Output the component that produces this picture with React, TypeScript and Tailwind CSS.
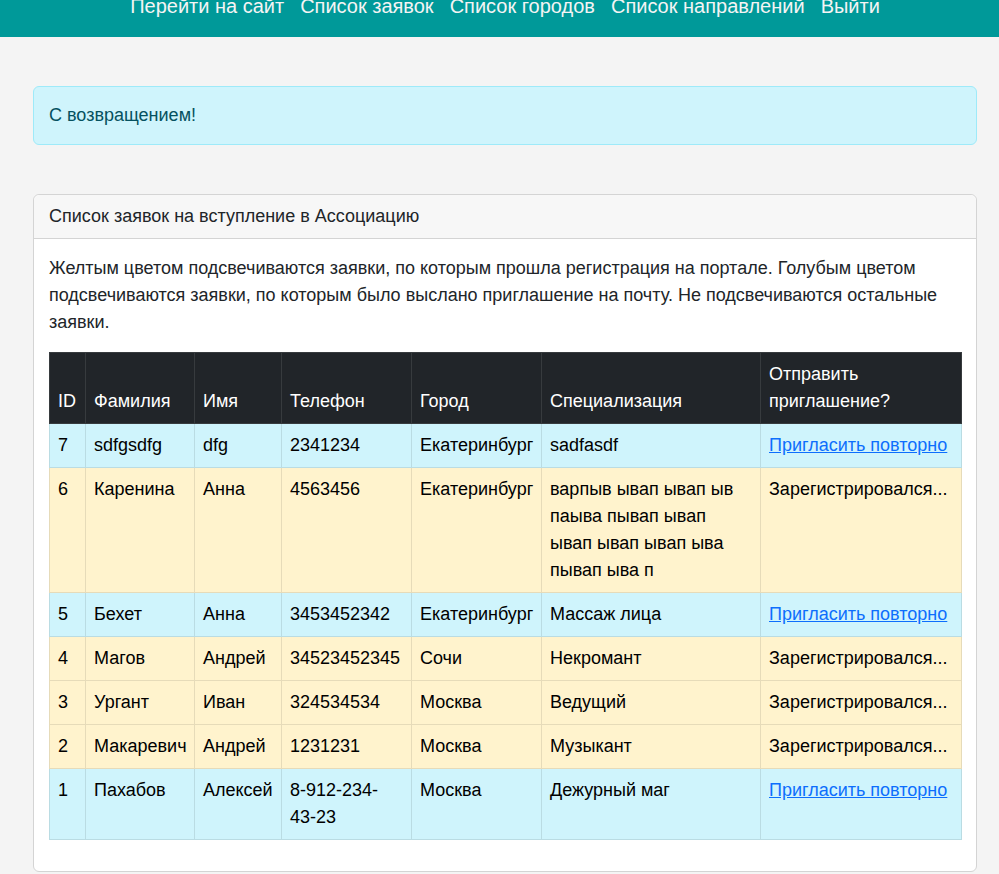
import React from 'react';

type Row = {
  id: number;
  last: string;
  first: string;
  phone: string;
  city: string;
  spec: string;
  kind: 'info' | 'warning';
};

const rows: Row[] = [
  { id: 7, last: 'sdfgsdfg', first: 'dfg', phone: '2341234', city: 'Екатеринбург', spec: 'sadfasdf', kind: 'info' },
  { id: 6, last: 'Каренина', first: 'Анна', phone: '4563456', city: 'Екатеринбург', spec: 'варпыв ывап ывап ыв паыва пывап ывап ывап ывап ывап ыва пывап ыва п', kind: 'warning' },
  { id: 5, last: 'Бехет', first: 'Анна', phone: '3453452342', city: 'Екатеринбург', spec: 'Массаж лица', kind: 'info' },
  { id: 4, last: 'Магов', first: 'Андрей', phone: '34523452345', city: 'Сочи', spec: 'Некромант', kind: 'warning' },
  { id: 3, last: 'Ургант', first: 'Иван', phone: '324534534', city: 'Москва', spec: 'Ведущий', kind: 'warning' },
  { id: 2, last: 'Макаревич', first: 'Андрей', phone: '1231231', city: 'Москва', spec: 'Музыкант', kind: 'warning' },
  { id: 1, last: 'Пахабов', first: 'Алексей', phone: '8-912-234-43-23', city: 'Москва', spec: 'Дежурный маг', kind: 'info' },
];

const navLinks = ['Перейти на сайт', 'Список заявок', 'Список городов', 'Список направлений', 'Выйти'];

export default function App() {
  return (
    <div className="min-h-screen bg-[#f4f4f4] text-[18px] leading-[27px] text-[#212529]" style={{ fontFamily: '"Liberation Sans", Arial, sans-serif' }}>
      <nav className="h-[37px] bg-[#009999] overflow-hidden">
        <div className="-mt-[9px] flex justify-center gap-[16px] pl-[11px] text-[20px] leading-[30px] text-[#f4f4f4]">
          {navLinks.map((l) => (
            <a key={l} href="#">{l}</a>
          ))}
        </div>
      </nav>

      <div className="pl-[33px] pr-[22px] pb-[2px]">
        <div className="mt-[49px] rounded-[6px] border border-[#9eeaf9] bg-[#cff4fc] p-[15px] text-[#055160]">
          С возвращением!
        </div>

        <div className="mt-[49px] rounded-[6px] border border-[#d4d4d4] bg-white">
          <div className="rounded-t-[6px] border-b border-[#d4d4d4] bg-[#f7f7f7] px-[15px] py-[8px]">
            Список заявок на вступление в Ассоциацию
          </div>
          <div className="px-[15px] pt-[16px] pb-[15px]">
            <p className="mb-[16px]">
              Желтым цветом подсвечиваются заявки, по которым прошла регистрация на портале. Голубым цветом подсвечиваются заявки, по которым было выслано приглашение на почту. Не подсвечиваются остальные заявки.
            </p>
            <table className="mb-[16px] w-full table-fixed border-collapse text-left">
              <colgroup>
                <col className="w-[36px]" />
                <col className="w-[109px]" />
                <col className="w-[87px]" />
                <col className="w-[130px]" />
                <col className="w-[130px]" />
                <col className="w-[219px]" />
                <col className="w-[201px]" />
              </colgroup>
              <thead>
                <tr className="bg-[#212529] text-white">
                  {['ID', 'Фамилия', 'Имя', 'Телефон', 'Город', 'Специализация', 'Отправить приглашение?'].map((h) => (
                    <th key={h} className="border border-[#373b3e] px-[8px] py-[8px] align-bottom font-normal">
                      {h}
                    </th>
                  ))}
                </tr>
              </thead>
              <tbody>
                {rows.map((r) => {
                  const info = r.kind === 'info';
                  const cell = info
                    ? 'border border-[#badce3] bg-[#cff4fc] px-[8px] py-[8px] align-top text-black'
                    : 'border border-[#e6dbb9] bg-[#fff3cd] px-[8px] py-[8px] align-top text-black';
                  return (
                    <tr key={r.id}>
                      <td className={cell}>{r.id}</td>
                      <td className={cell}>{r.last}</td>
                      <td className={cell}>{r.first}</td>
                      <td className={cell}>{r.phone}</td>
                      <td className={cell}>{r.city}</td>
                      <td className={cell}>{r.spec}</td>
                      <td className={cell + ' whitespace-nowrap'}>
                        {info ? (
                          <a href="#" className="text-[#0d6efd] underline">Пригласить повторно</a>
                        ) : (
                          'Зарегистрировался...'
                        )}
                      </td>
                    </tr>
                  );
                })}
              </tbody>
            </table>
          </div>
        </div>
      </div>
    </div>
  );
}
